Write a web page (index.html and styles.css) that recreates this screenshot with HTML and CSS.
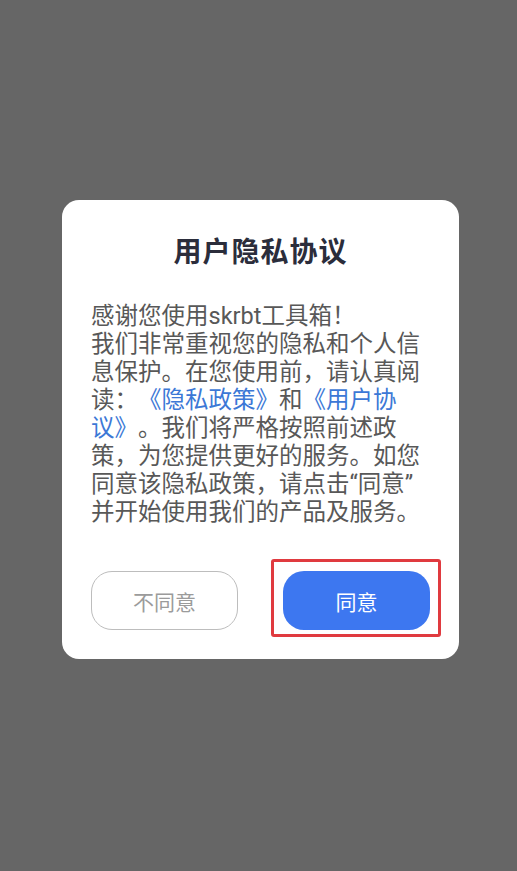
FILE: index.html
```html
<!DOCTYPE html>
<html lang="zh-CN">
<head>
<meta charset="utf-8">
<title>用户隐私协议</title>
<link rel="stylesheet" href="styles.css">
</head>
<body>
<div class="overlay">
  <div class="dialog">
    <h1 class="title">用户隐私协议</h1>
    <p class="content">感谢您使用skrbt工具箱！<br>我们非常重视您的隐私和个人信息保护。在您使用前，请认真阅读：<a class="link">《隐私政策》</a>和<a class="link">《用户协议》</a>。我们将严格按照前述政策，为您提供更好的服务。如您同意该隐私政策，请点击“同意”<wbr>并开始使用我们的产品及服务。</p>
    <div class="actions">
      <button class="btn btn-reject">不同意</button>
      <div class="agree-wrap">
        <button class="btn btn-agree">同意</button>
        <span class="highlight"></span>
      </div>
    </div>
  </div>
</div>
</body>
</html>
```

FILE: styles.css
```css
html, body {
  margin: 0;
  padding: 0;
  background: #666666;
  height: 100%;
}
body {
  font-family: "Noto Sans CJK SC", sans-serif;
}
.overlay {
  display: flex;
  flex-direction: column;
  align-items: flex-start;
  padding: 200px 0 0 62px;
}
.dialog {
  width: 397px;
  box-sizing: border-box;
  background: #ffffff;
  border-radius: 17px;
  padding: 30px 29px 29px 29px;
}
.title {
  margin: 0;
  font-size: 28px;
  line-height: 40px;
  font-weight: 700;
  color: #2b2d3b;
  text-align: center;
  letter-spacing: 1px;
  text-spacing-trim: space-all;
}
.content {
  width: 345px;
  margin: 32px 0 0 0;
  font-family: Roboto, "Noto Sans CJK SC", sans-serif;
  font-size: 23.5px;
  line-height: 28px;
  color: #585858;
  line-break: strict;
  text-spacing-trim: space-all;
}
.link {
  color: #3c78d6;
  text-decoration: none;
}
.actions {
  display: flex;
  justify-content: space-between;
  margin-top: 45px;
}
.btn {
  width: 147px;
  height: 59px;
  border-radius: 21px;
  font-family: "Noto Sans CJK SC", sans-serif;
  font-size: 21px;
  box-sizing: border-box;
  cursor: pointer;
}
.btn-reject {
  background: #ffffff;
  border: 1.5px solid #bdbdbd;
  color: #9b9b9b;
}
.agree-wrap {
  position: relative;
}
.btn-agree {
  background: #3d77f0;
  border: none;
  color: #ffffff;
  display: block;
}
.highlight {
  position: absolute;
  left: -12px;
  top: -12px;
  right: -11px;
  bottom: -7px;
  border: 3px solid #e03a3f;
  border-radius: 3px;
  pointer-events: none;
}
```
